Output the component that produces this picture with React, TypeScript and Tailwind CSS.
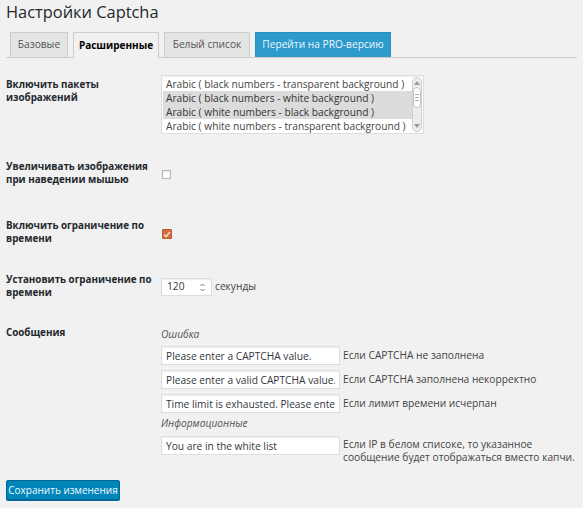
import React from "react";

/* ---------------- DATA ---------------- */

const tabs = [
  { name: "Базовые", kind: "idle", width: "w-[58px]" },
  { name: "Расширенные", kind: "active", width: "w-[86px]" },
  { name: "Белый список", kind: "idle", width: "w-[86px]" },
  { name: "Перейти на PRO-версию", kind: "pro", width: "w-[136px]" },
];

const packages = [
  { name: "Arabic ( black numbers - transparent background )", selected: false },
  { name: "Arabic ( black numbers - white background )", selected: true },
  { name: "Arabic ( white numbers - black background )", selected: true },
  { name: "Arabic ( white numbers - transparent background )", selected: false },
];

const errors = [
  { value: "Please enter a CAPTCHA value.", hint: "Если CAPTCHA не заполнена" },
  { value: "Please enter a valid CAPTCHA value.", hint: "Если CAPTCHA заполнена некорректно" },
  { value: "Time limit is exhausted. Please enter CAPTCHA once again.", hint: "Если лимит времени исчерпан" },
];

/* ---------------- SMALL PARTS ---------------- */

const Label = ({ children }: { children: React.ReactNode }) => (
  <div className="w-[155px] shrink-0 text-[9.8px] leading-[13px] font-bold text-[#23282d]">
    {children}
  </div>
);

const TextField = ({ value }: { value: string }) => (
  <input
    type="text"
    readOnly
    defaultValue={value}
    className="h-[19px] w-[179px] shrink-0 border border-[#ddd] bg-white px-[4px] font-['Open_Sans',sans-serif] text-[10.2px] text-[#32373c] shadow-[inset_0_1px_2px_rgba(0,0,0,0.07)] outline-none"
  />
);

const Scrollbar = () => (
  <div className="flex w-[10px] flex-col items-center rounded-full border border-[#cfcfcf] bg-[#ececec] py-[2px]">
    <svg width="6" height="4" viewBox="0 0 6 4" className="mt-[1px]">
      <path d="M0 4 L3 0 L6 4 Z" fill="#9a9a9a" />
    </svg>
    <div className="mt-[2px] flex h-[21px] w-[8px] flex-col items-center justify-center gap-[2px] rounded-full border border-[#c6c6c6] bg-white">
      <span className="h-px w-[4px] bg-[#aaa]" />
      <span className="h-px w-[4px] bg-[#aaa]" />
      <span className="h-px w-[4px] bg-[#aaa]" />
    </div>
    <div className="flex-1" />
    <svg width="6" height="4" viewBox="0 0 6 4" className="mb-[1px]">
      <path d="M0 0 L6 0 L3 4 Z" fill="#9a9a9a" />
    </svg>
  </div>
);

/* ---------------- APP ---------------- */

export default function App() {
  return (
    <div className="min-h-[508px] bg-[#f1f1f1] px-[6px] pt-[1px] font-['Open_Sans',sans-serif] text-[10.2px] text-[#444]">
      {/* TITLE */}
      <h1 className="text-[16.4px] leading-[22px] font-normal text-[#23282d]">
        Настройки Captcha
      </h1>

      {/* TABS */}
      <div className="mt-[9px] flex items-end gap-[5px] border-b border-[#ccc] pl-[4px]">
        {tabs.map((tab) => {
          if (tab.kind === "active") {
            return (
              <div
                key={tab.name}
                className={`-mb-px flex h-[26px] items-center justify-center border border-b-0 border-[#ccc] bg-[#f1f1f1] pb-px text-[10px] font-bold whitespace-nowrap text-[#000] ${tab.width}`}
              >
                {tab.name}
              </div>
            );
          }
          if (tab.kind === "pro") {
            return (
              <div
                key={tab.name}
                className={`flex h-[25px] items-center justify-center border border-b-0 border-[#2a8fbf] bg-[#2d9acc] text-[10.2px] whitespace-nowrap text-[#eef7fb] ${tab.width}`}
              >
                {tab.name}
              </div>
            );
          }
          return (
            <div
              key={tab.name}
              className={`flex h-[25px] items-center justify-center border border-b-0 border-[#ccc] bg-[#e4e4e4] text-[10.2px] whitespace-nowrap text-[#555] ${tab.width}`}
            >
              {tab.name}
            </div>
          );
        })}
      </div>

      {/* PACKAGES */}
      <div className="mt-[17px] flex items-start">
        <div className="pt-[3px]">
          <Label>
            Включить пакеты
            <br />
            изображений
          </Label>
        </div>
        <div className="flex h-[59px] w-[263px] border border-[#ddd] bg-white py-px pl-px pr-[1px] shadow-[inset_0_1px_2px_rgba(0,0,0,0.07)]">
          <div className="flex-1">
            {packages.map((p) => (
              <div
                key={p.name}
                className={`h-[14px] whitespace-nowrap pl-[3px] text-[10.2px] leading-[14px] ${
                  p.selected ? "bg-[#dcdcdc] text-[#333]" : "text-[#444]"
                }`}
              >
                {p.name}
              </div>
            ))}
          </div>
          <Scrollbar />
        </div>
      </div>

      {/* ZOOM ON HOVER */}
      <div className="mt-[26px] flex items-start">
        <Label>
          Увеличивать изображения
          <br />
          при наведении мышью
        </Label>
        <div className="pl-px pt-[10px]">
          <div className="h-[9px] w-[9px] border border-[#b4b9be] bg-white shadow-[inset_0_1px_2px_rgba(0,0,0,0.1)]" />
        </div>
      </div>

      {/* TIME LIMIT */}
      <div className="mt-[33px] flex items-start">
        <Label>
          Включить ограничение по
          <br />
          времени
        </Label>
        <div className="pl-px pt-[10px]">
          <div className="flex h-[10px] w-[10px] items-center justify-center rounded-[1px] border border-[#b8582a] bg-[#d36d3c]">
            <svg width="8" height="7" viewBox="0 0 8 7">
              <path
                d="M1 3.6 L3.1 5.6 L7 1"
                fill="none"
                stroke="#f6dccd"
                strokeWidth="1.5"
              />
            </svg>
          </div>
        </div>
      </div>

      {/* TIME VALUE */}
      <div className="mt-[28px] flex items-start">
        <Label>
          Установить ограничение по
          <br />
          времени
        </Label>
        <div className="flex items-center pt-[5px]">
          <div className="flex h-[18px] w-[51px] items-center justify-between border border-[#ddd] bg-white pl-[5px] pr-[6px] text-[10.2px] text-[#32373c] shadow-[inset_0_1px_2px_rgba(0,0,0,0.07)]">
            <span>120</span>
            <svg width="5" height="9" viewBox="0 0 5 9">
              <path d="M0.5 3 L2.5 1 L4.5 3" fill="none" stroke="#777" strokeWidth="1" />
              <path d="M0.5 6 L2.5 8 L4.5 6" fill="none" stroke="#777" strokeWidth="1" />
            </svg>
          </div>
          <span className="ml-[3px] text-[10.2px] text-[#444]">секунды</span>
        </div>
      </div>

      {/* MESSAGES */}
      <div className="mt-[27px] flex items-start">
        <Label>Сообщения</Label>
        <div className="flex flex-col pt-[2px]">
          <div className="text-[10.2px] leading-[13px] italic text-[#555]">Ошибка</div>
          <div className="mt-[5px] flex flex-col gap-[5px]">
            {errors.map((e) => (
              <div key={e.hint} className="flex items-center gap-[3px]">
                <TextField value={e.value} />
                <span className="whitespace-nowrap text-[10.2px] text-[#444]">{e.hint}</span>
              </div>
            ))}
          </div>
          <div className="mt-[4px] text-[10.2px] leading-[13px] italic text-[#555]">
            Информационные
          </div>
          <div className="mt-[6px] flex items-start gap-[3px]">
            <TextField value="You are in the white list" />
            <span className="whitespace-nowrap pt-[2px] text-[10.2px] leading-[13px] text-[#444]">
              Если IP в белом списоке, то указанное
              <br />
              сообщение будет отображаться вместо капчи.
            </span>
          </div>
        </div>
      </div>

      {/* SAVE */}
      <div className="mt-[16px]">
        <button className="h-[20px] w-[114px] rounded-[2px] border border-[#006799] bg-[#0085ba] text-[10px] text-[#f4fafd] shadow-[0_1px_0_#006799]">
          Сохранить изменения
        </button>
      </div>
    </div>
  );
}
